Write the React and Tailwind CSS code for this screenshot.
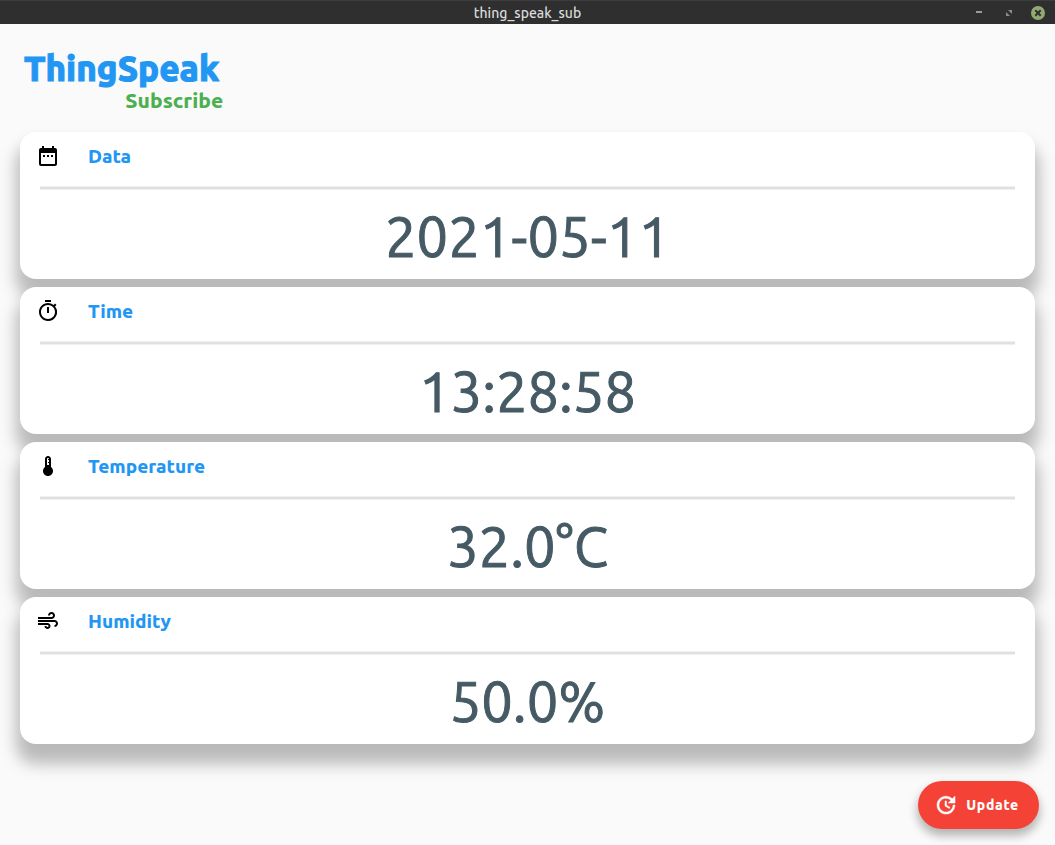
import React from "react";
import { MdDateRange, MdOutlineTimer, MdDeviceThermostat, MdAir } from "react-icons/md";

const readings = [
  { label: "Data", value: "2021-05-11", Icon: MdDateRange },
  { label: "Time", value: "13:28:58", Icon: MdOutlineTimer },
  { label: "Temperature", value: "32.0°C", Icon: MdDeviceThermostat },
  { label: "Humidity", value: "50.0%", Icon: MdAir },
];

function UpdateIcon({ className }) {
  return (
    <svg viewBox="0 0 24 24" fill="currentColor" stroke="currentColor" strokeWidth="0.5" className={className} aria-hidden="true">
      <path d="M21 10.12h-6.78l2.74-2.82c-2.73-2.7-7.15-2.8-9.88-.1-2.73 2.71-2.73 7.08 0 9.79 2.73 2.71 7.15 2.71 9.88 0C18.32 15.65 19 14.08 19 12.1h2c0 1.98-.88 4.55-2.64 6.29-3.51 3.48-9.21 3.48-12.72 0-3.5-3.47-3.53-9.11-.02-12.58 3.51-3.47 9.14-3.47 12.65 0L21 3v7.12zM12.5 8v4.25l3.5 2.08-.72 1.21L11 13V8h1.5z" />
    </svg>
  );
}

function TitleBar() {
  return (
    <header className="grid h-6 grid-cols-[1fr_auto_1fr] items-center border-t border-[#3d3d3d] bg-[#2f2f2f] px-[10px]">
      <span />
      <span className="pt-px text-[14px] leading-5 font-medium text-[#dadada]">thing_speak_sub</span>
      <div className="flex items-center justify-end gap-[14px]">
        <button type="button" aria-label="Minimize" className="flex size-4 items-center justify-center">
          <svg viewBox="0 0 16 16" className="size-4" fill="#9b9b9b">
            <rect x="5" y="6" width="6" height="2" />
          </svg>
        </button>
        <button type="button" aria-label="Maximize" className="flex size-4 items-center justify-center">
          <svg viewBox="0 0 16 16" className="size-4" fill="#8d8d8d">
            <path d="M7 5h4v4zM5 7l4 4H5z" />
          </svg>
        </button>
        <button type="button" aria-label="Close" className="flex size-[14px] items-center justify-center rounded-full bg-[#92a973]">
          <svg viewBox="0 0 14 14" className="size-[14px]" fill="none" stroke="#2f2f2f" strokeWidth="2">
            <path d="M4.3 4.3l5.4 5.4M9.7 4.3l-5.4 5.4" />
          </svg>
        </button>
      </div>
    </header>
  );
}

function ReadingCard({ label, value, Icon }) {
  return (
    <section className="rounded-2xl bg-white px-4 pt-3 pb-2 shadow-[0_16px_16px_4px_rgba(0,0,0,0.26)]">
      <div className="flex h-6 items-center gap-7">
        <Icon className="size-6 text-black" />
        <h2 className="text-[19px] leading-6 font-extrabold text-[#2196f3]">{label}</h2>
      </div>
      <div className="mx-1 mt-[18px] h-1 border-y border-[#f0f0f0] bg-[#e0e0e0]" />
      <p className="mt-3 text-center text-[56px] leading-[69px] text-[#455a64] [-webkit-text-stroke:1px_#455a64]">{value}</p>
    </section>
  );
}

export default function App() {
  return (
    <div className="flex min-h-screen flex-col bg-[#fafafa] font-['Ubuntu','Noto_Sans',sans-serif]">
      <TitleBar />
      <main className="flex grow flex-col px-5 pt-6">
        <div className="flex w-fit flex-col items-end pl-1">
          <h1 className="pr-1 text-[35px] leading-10 font-extrabold text-[#2196f3] [-webkit-text-stroke:1px_#2196f3]">ThingSpeak</h1>
          <p className="text-[21px] leading-6 font-extrabold text-[#4caf50]">Subscribe</p>
        </div>
        <div className="mt-5 flex flex-col gap-2">
          {readings.map((reading) => (
            <ReadingCard key={reading.label} {...reading} />
          ))}
        </div>
      </main>
      <footer className="flex justify-end p-4">
        <button
          type="button"
          className="flex h-12 items-center gap-2 rounded-full bg-[#f44336] pr-5 pl-4 text-sm font-extrabold tracking-wider text-white shadow-[0_6px_10px_1px_rgba(0,0,0,0.28)]"
        >
          <UpdateIcon className="size-6" />
          Update
        </button>
      </footer>
    </div>
  );
}
